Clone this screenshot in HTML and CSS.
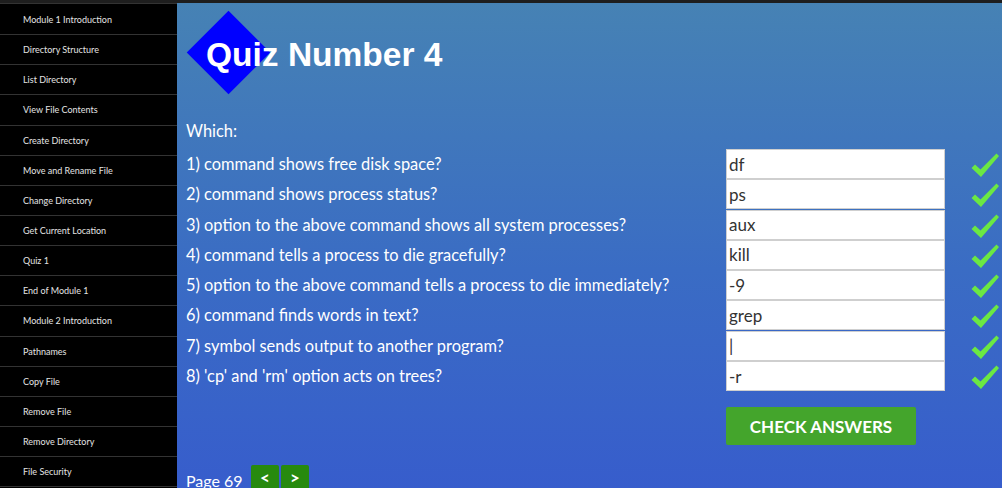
FILE: index.html
```html
<!DOCTYPE html>
<html>
<head>
<meta charset="utf-8">
<title>Quiz Number 4</title>
<link rel="stylesheet" href="styles.css">
</head>
<body>
<div class="page">
  <nav class="sidebar">
    <a class="nav-item">Module 1 Introduction</a>
    <a class="nav-item">Directory Structure</a>
    <a class="nav-item">List Directory</a>
    <a class="nav-item">View File Contents</a>
    <a class="nav-item">Create Directory</a>
    <a class="nav-item">Move and Rename File</a>
    <a class="nav-item">Change Directory</a>
    <a class="nav-item">Get Current Location</a>
    <a class="nav-item">Quiz 1</a>
    <a class="nav-item">End of Module 1</a>
    <a class="nav-item">Module 2 Introduction</a>
    <a class="nav-item">Pathnames</a>
    <a class="nav-item">Copy File</a>
    <a class="nav-item">Remove File</a>
    <a class="nav-item">Remove Directory</a>
    <a class="nav-item">File Security</a>
  </nav>
  <main class="content">
    <header class="title-block">
      <span class="diamond"></span>
      <h1 class="title">Quiz Number 4</h1>
    </header>
    <p class="which">Which:</p>
    <div class="quiz">
      <div class="q">1) command shows free disk space?</div>
      <input class="answer" type="text" value="df">
      <svg class="tick" viewBox="0 0 28 24"><path d="M0.5 15 L4 11.5 L9.5 16.5 L25.5 0.5 L28 3 L10 24 Z"/></svg>

      <div class="q">2) command shows process status?</div>
      <input class="answer" type="text" value="ps">
      <svg class="tick" viewBox="0 0 28 24"><path d="M0.5 15 L4 11.5 L9.5 16.5 L25.5 0.5 L28 3 L10 24 Z"/></svg>

      <div class="q">3) option to the above command shows all system processes?</div>
      <input class="answer" type="text" value="aux">
      <svg class="tick" viewBox="0 0 28 24"><path d="M0.5 15 L4 11.5 L9.5 16.5 L25.5 0.5 L28 3 L10 24 Z"/></svg>

      <div class="q">4) command tells a process to die gracefully?</div>
      <input class="answer" type="text" value="kill">
      <svg class="tick" viewBox="0 0 28 24"><path d="M0.5 15 L4 11.5 L9.5 16.5 L25.5 0.5 L28 3 L10 24 Z"/></svg>

      <div class="q">5) option to the above command tells a process to die immediately?</div>
      <input class="answer" type="text" value="-9">
      <svg class="tick" viewBox="0 0 28 24"><path d="M0.5 15 L4 11.5 L9.5 16.5 L25.5 0.5 L28 3 L10 24 Z"/></svg>

      <div class="q">6) command finds words in text?</div>
      <input class="answer" type="text" value="grep">
      <svg class="tick" viewBox="0 0 28 24"><path d="M0.5 15 L4 11.5 L9.5 16.5 L25.5 0.5 L28 3 L10 24 Z"/></svg>

      <div class="q">7) symbol sends output to another program?</div>
      <input class="answer" type="text" value="|">
      <svg class="tick" viewBox="0 0 28 24"><path d="M0.5 15 L4 11.5 L9.5 16.5 L25.5 0.5 L28 3 L10 24 Z"/></svg>

      <div class="q">8) 'cp' and 'rm' option acts on trees?</div>
      <input class="answer" type="text" value="-r">
      <svg class="tick" viewBox="0 0 28 24"><path d="M0.5 15 L4 11.5 L9.5 16.5 L25.5 0.5 L28 3 L10 24 Z"/></svg>
    </div>
    <div class="actions">
      <button class="check-btn">CHECK ANSWERS</button>
    </div>
    <div class="pager">
      <span class="page-label">Page 69</span>
      <button class="pg-btn">&lt;</button>
      <button class="pg-btn">&gt;</button>
    </div>
  </main>
</div>
</body>
</html>
```

FILE: styles.css
```css
html, body {
  margin: 0;
  padding: 0;
  height: 100%;
  overflow: hidden;
}
body {
  border-top: 3px solid #1e1e1e;
  box-sizing: border-box;
  font-family: Lato, "Open Sans", sans-serif;
  background: #000;
}
.page {
  display: flex;
  height: 485px;
}
.sidebar {
  width: 177px;
  flex: none;
  background: #000;
  border-top: 1px solid #333;
  padding-top: 1px;
  display: flex;
  flex-direction: column;
}
.nav-item {
  box-sizing: border-box;
  height: 30.15px;
  flex: none;
  border-bottom: 1px solid #333;
  color: #e4e4e4;
  font-size: 9px;
  padding-left: 23px;
  display: flex;
  align-items: center;
}
.content {
  flex: 1;
  padding-left: 9px;
  background: linear-gradient(to bottom, #4682b4 0%, #3a6cc4 55%, #375dcc 100%);
  color: #fff;
  overflow: hidden;
}
.title-block {
  position: relative;
  height: 72px;
  display: flex;
  align-items: flex-end;
}
.diamond {
  position: absolute;
  left: 13px;
  top: 20px;
  width: 59px;
  height: 59px;
  background: #0000ff;
  transform: rotate(45deg);
}
.title {
  position: relative;
  margin: 0 0 0 20px;
  font-family: "Liberation Sans", Arial, sans-serif;
  font-weight: bold;
  font-size: 33.5px;
  line-height: 40px;
  color: #fff;
}
.which {
  margin: 46px 0 0 0;
  font-size: 16.4px;
  line-height: 20px;
}
.quiz {
  margin-top: 8px;
  display: grid;
  grid-template-columns: 514px 219px 28px;
  grid-auto-rows: 30.3px;
  column-gap: 26px;
  align-items: start;
}
.q {
  font-size: 16.4px;
  line-height: 30px;
  white-space: nowrap;
}
.answer {
  box-sizing: border-box;
  width: 219px;
  height: 30px;
  margin: 0;
  border: 1px solid #cfcfcf;
  padding: 0 2px;
  font-family: Lato, sans-serif;
  font-size: 17px;
  color: #333;
  background: #fff;
  outline: none;
}
.tick {
  width: 28px;
  height: 24px;
  margin-top: 4px;
  fill: #6be843;
}
.actions {
  margin-top: 16px;
  padding-left: 540px;
}
.check-btn {
  width: 190px;
  height: 38px;
  border: none;
  border-radius: 2px;
  background: #44a52c;
  color: #fff;
  font-family: Lato, sans-serif;
  font-weight: bold;
  font-size: 17px;
  padding: 0;
}
.pager {
  margin-top: 20px;
  display: flex;
  align-items: flex-start;
}
.page-label {
  font-size: 16px;
  line-height: 20px;
  padding-top: 6px;
  width: 65px;
}
.pg-btn {
  width: 28px;
  height: 30px;
  margin-right: 2px;
  border: none;
  border-radius: 2px 2px 0 0;
  background: #278a0e;
  color: #fff;
  font-family: Lato, sans-serif;
  font-weight: bold;
  font-size: 17px;
  padding: 0 0 6px 0;
}
```
